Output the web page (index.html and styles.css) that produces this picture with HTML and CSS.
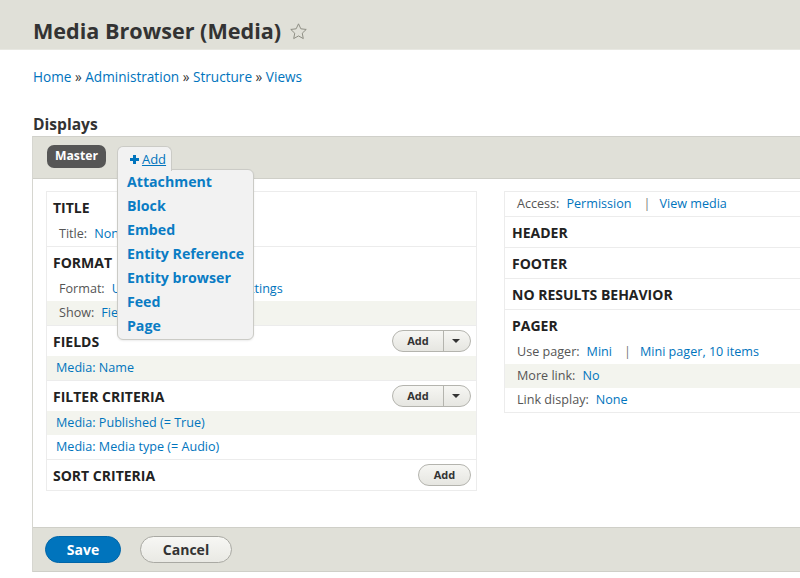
FILE: index.html
```html
<!DOCTYPE html>
<html lang="en">
<head>
<meta charset="utf-8">
<title>Media Browser (Media)</title>
<link rel="stylesheet" href="styles.css">
</head>
<body>
<header class="page-header">
  <h1 class="page-title">Media Browser (Media)
    <svg class="star" width="19" height="19" viewBox="0 0 24 24" aria-hidden="true"><path d="M12 2.3l2.95 6.3 6.8.8-5 4.75 1.3 6.8L12 17.6l-6.05 3.35 1.3-6.8-5-4.75 6.8-.8z" fill="none" stroke="#8a8a80" stroke-width="1.2" stroke-linejoin="round"/></svg>
  </h1>
</header>
<main class="content">
  <nav class="breadcrumb"><a href="#">Home</a> » <a href="#">Administration</a> » <a href="#">Structure</a> » <a href="#">Views</a></nav>
  <h2 class="section-title">Displays</h2>
  <div class="panel">
    <div class="tabs">
      <span class="tab-master">Master</span>
      <div class="add-menu">
        <a class="add-toggle" href="#"><span class="plus"></span><span class="add-label">Add</span></a>
        <ul class="add-list">
          <li><a href="#">Attachment</a></li>
          <li><a href="#">Block</a></li>
          <li><a href="#">Embed</a></li>
          <li><a href="#">Entity Reference</a></li>
          <li><a href="#">Entity browser</a></li>
          <li><a href="#">Feed</a></li>
          <li><a href="#">Page</a></li>
        </ul>
      </div>
    </div>
    <div class="columns">
      <div class="col col-left">
        <section class="bucket">
          <div class="bucket-head">TITLE</div>
          <div class="row row-label"><span class="lbl">Title:</span><a href="#">None</a></div>
        </section>
        <section class="bucket">
          <div class="bucket-head">FORMAT</div>
          <div class="row row-label"><span class="lbl">Format:</span><a href="#">Unformatted list</a><span class="sep">|</span><a href="#">Settings</a></div>
          <div class="row row-label row-alt"><span class="lbl">Show:</span><a href="#">Fields</a><span class="sep">|</span><a href="#">Settings</a></div>
        </section>
        <section class="bucket">
          <div class="bucket-head">FIELDS
            <span class="dropbutton"><span class="db-main">Add</span><span class="db-arrow"><span class="caret"></span></span></span>
          </div>
          <div class="row row-alt"><a href="#">Media: Name</a></div>
        </section>
        <section class="bucket">
          <div class="bucket-head">FILTER CRITERIA
            <span class="dropbutton"><span class="db-main">Add</span><span class="db-arrow"><span class="caret"></span></span></span>
          </div>
          <div class="row row-alt"><a href="#">Media: Published (= True)</a></div>
          <div class="row"><a href="#">Media: Media type (= Audio)</a></div>
        </section>
        <section class="bucket">
          <div class="bucket-head">SORT CRITERIA
            <span class="single-btn">Add</span>
          </div>
        </section>
      </div>
      <div class="col col-right">
        <div class="row row-label row-access"><span class="lbl">Access:</span><a href="#">Permission</a><span class="sep">|</span><a href="#">View media</a></div>
        <section class="bucket"><div class="bucket-head">HEADER</div></section>
        <section class="bucket"><div class="bucket-head">FOOTER</div></section>
        <section class="bucket"><div class="bucket-head">NO RESULTS BEHAVIOR</div></section>
        <section class="bucket">
          <div class="bucket-head">PAGER</div>
          <div class="row row-label"><span class="lbl">Use pager:</span><a href="#">Mini</a><span class="sep">|</span><a href="#">Mini pager, 10 items</a></div>
          <div class="row row-label row-alt"><span class="lbl">More link:</span><a href="#">No</a></div>
          <div class="row row-label"><span class="lbl">Link display:</span><a href="#">None</a></div>
        </section>
      </div>
    </div>
    <div class="actions">
      <button class="btn btn-primary" type="button">Save</button>
      <button class="btn btn-secondary" type="button">Cancel</button>
    </div>
  </div>
</main>
</body>
</html>
```

FILE: styles.css
```css
html, body {
  margin: 0;
  padding: 0;
  overflow: hidden;
  background: #fff;
}
body {
  font-family: "Open Sans", "Noto Sans", sans-serif;
  color: #333;
  width: 800px;
  height: 578px;
}
a { color: #0074bd; text-decoration: none; }
ul { margin: 0; padding: 0; list-style: none; }

.page-header {
  height: 50px;
  box-sizing: border-box;
  background: #e0e0d8;
  border-bottom: 1px solid #e8e8e2;
  padding: 16px 0 0 33px;
}
.page-title {
  margin: 0;
  font-size: 21.6px;
  line-height: 30px;
  font-weight: 700;
  color: #333;
  display: flex;
  align-items: center;
  gap: 8px;
}
.star { display: block; }

.content {
  padding: 17px 0 0 32px;
}
.breadcrumb {
  padding-left: 1px;
  font-size: 13.6px;
  line-height: 20px;
  color: #333;
}
.section-title {
  margin: 27px 0 2px;
  padding-left: 1px;
  font-size: 15.6px;
  line-height: 20px;
  font-weight: 700;
  color: #333;
}

.panel {
  width: 900px;
  border-left: 1px solid #d6d6d0;
  border-top: 1px solid #d0d0ca;
}
.tabs {
  height: 42px;
  box-sizing: border-box;
  background: #e0e0d8;
  border-bottom: 1px solid #cfcfc8;
  padding: 8px 0 0 14px;
  display: flex;
  align-items: flex-start;
}
.tab-master {
  height: 23px;
  line-height: 22px;
  padding: 0 8px;
  background: #565656;
  color: #fff;
  font-size: 12.2px;
  font-weight: 700;
  border-radius: 7px;
}
.add-menu {
  position: relative;
  margin-left: 11px;
  margin-top: 1px;
}
.add-toggle {
  position: relative;
  z-index: 3;
  display: flex;
  align-items: center;
  height: 25px;
  width: 55px;
  box-sizing: border-box;
  padding: 0 0 0 12px;
  background: #f2f2f2;
  border: 1px solid #cbcbc6;
  border-bottom: none;
  border-radius: 6px 6px 0 0;
  font-size: 13px;
  color: #0074bd;
}
.add-label { text-decoration: underline; line-height: 16px; }
.plus {
  position: relative;
  width: 9px;
  height: 9px;
  margin-right: 3px;
}
.plus::before, .plus::after {
  content: "";
  position: absolute;
  background: #0074bd;
}
.plus::before { left: 3px; top: 0; width: 3px; height: 9px; }
.plus::after { left: 0; top: 3px; width: 9px; height: 3px; }
.add-list {
  position: absolute;
  z-index: 2;
  top: 23px;
  left: 0;
  width: 137px;
  box-sizing: border-box;
  padding: 0 0 1px 9px;
  background: #f2f2f2;
  border: 1px solid #cbcbc6;
  border-radius: 0 6px 6px 6px;
  box-shadow: 0 1px 2px rgba(0,0,0,0.08);
}
.add-list li {
  height: 24px;
  line-height: 24px;
  font-size: 14.2px;
  font-weight: 700;
}
.add-list li a { color: #0a7cc4; }

.columns {
  display: flex;
  align-items: flex-start;
  gap: 27px;
  padding: 12px 0 0 13px;
}
.col {
  border: 1px solid #ececec;
  box-sizing: border-box;
  background: #fff;
}
.col-left { width: 431px; }
.col-right { flex: 1; }

.bucket { border-bottom: 1px solid #ececec; }
.bucket:last-child { border-bottom: none; }
.bucket-head {
  height: 30px;
  display: flex;
  align-items: center;
  padding: 0 5px 0 6px;
  font-size: 14px;
  font-weight: 700;
  color: #222;
}
.col-right .bucket-head { padding-left: 7px; }
.row {
  height: 24px;
  line-height: 24px;
  padding-left: 9px;
  font-size: 12.6px;
  color: #555;
  white-space: nowrap;
  overflow: hidden;
}
.row-label { padding-left: 12px; }
.row-alt { background: #f3f4ee; }
.row-access { border-bottom: 1px solid #ececec; }
.lbl { color: #555; margin-right: 7px; }
.sep { color: #777; margin: 0 9px 0 12px; }

.dropbutton {
  margin-left: auto;
  display: flex;
  height: 22px;
  box-sizing: border-box;
  border: 1px solid #b4b4ae;
  border-radius: 11px;
  background: linear-gradient(#f6f6f3, #e6e6e1);
  font-size: 11px;
  font-weight: 700;
  color: #333;
}
.db-main {
  width: 50px;
  text-align: center;
  line-height: 20px;
  border-right: 1px solid #b4b4ae;
}
.db-arrow {
  width: 26px;
  display: flex;
  align-items: center;
  justify-content: center;
}
.caret {
  width: 0;
  height: 0;
  border-left: 4px solid transparent;
  border-right: 4px solid transparent;
  border-top: 4px solid #333;
  margin-left: -2px;
}
.single-btn {
  margin-left: auto;
  width: 53px;
  height: 22px;
  box-sizing: border-box;
  border: 1px solid #b4b4ae;
  border-radius: 11px;
  background: linear-gradient(#f6f6f3, #e6e6e1);
  font-size: 11px;
  font-weight: 700;
  color: #333;
  text-align: center;
  line-height: 20px;
}

.actions {
  margin-top: 36px;
  height: 45px;
  box-sizing: border-box;
  background: #e0e0d8;
  border-top: 1px solid #cfcfc8;
  border-bottom: 1px solid #cfcfc8;
  padding: 8px 0 0 12px;
  display: flex;
  align-items: flex-start;
  gap: 19px;
}
.btn {
  height: 27px;
  border-radius: 14px;
  font-family: "Open Sans", "Noto Sans", sans-serif;
  font-size: 14px;
  font-weight: 700;
  padding: 0;
  cursor: pointer;
}
.btn-primary {
  width: 76px;
  background: #0074bd;
  border: 1px solid #0065a8;
  color: #fff;
}
.btn-secondary {
  width: 92px;
  background: linear-gradient(#f7f7f4, #e9e9e4);
  border: 1px solid #a9a9a3;
  color: #333;
}
```
